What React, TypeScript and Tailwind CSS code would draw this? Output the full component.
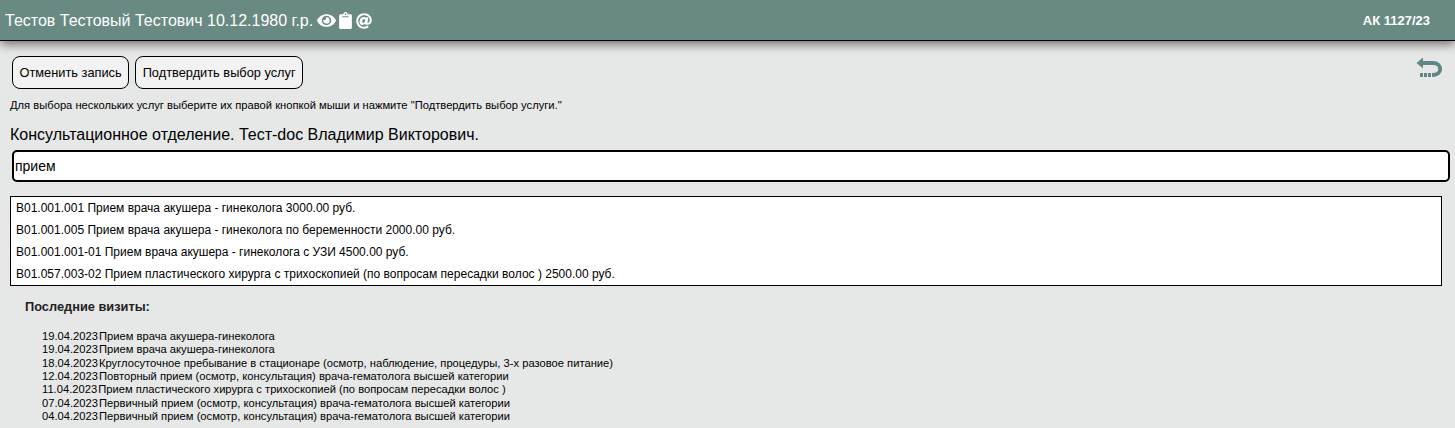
import React from 'react';
import { FaEye, FaClipboard, FaAt } from 'react-icons/fa';

const services = [
  'B01.001.001 Прием врача акушера - гинеколога 3000.00 руб.',
  'B01.001.005 Прием врача акушера - гинеколога по беременности 2000.00 руб.',
  'B01.001.001-01 Прием врача акушера - гинеколога с УЗИ 4500.00 руб.',
  'B01.057.003-02 Прием пластического хирурга с трихоскопией (по вопросам пересадки волос ) 2500.00 руб.',
];

const visits = [
  ['19.04.2023', 'Прием врача акушера-гинеколога'],
  ['19.04.2023', 'Прием врача акушера-гинеколога'],
  ['18.04.2023', 'Круглосуточное пребывание в стационаре (осмотр, наблюдение, процедуры, 3-х разовое питание)'],
  ['12.04.2023', 'Повторный прием (осмотр, консультация) врача-гематолога высшей категории'],
  ['11.04.2023', 'Прием пластического хирурга с трихоскопией (по вопросам пересадки волос )'],
  ['07.04.2023', 'Первичный прием (осмотр, консультация) врача-гематолога высшей категории'],
  ['04.04.2023', 'Первичный прием (осмотр, консультация) врача-гематолога высшей категории'],
];

const App: React.FC = () => {
  return (
    <div className="h-[428px] w-[1455px] overflow-hidden bg-[#e6e8e7] font-['Liberation_Sans',Arial,sans-serif] text-black">
      {/* Шапка */}
      <div className="flex h-[41px] items-center justify-between border-b-[1px] border-black bg-[#688a82] pl-[5px] pr-[25px] pt-[1px] text-white shadow-[0_3px_10px_rgba(0,0,0,0.55)]">
        <div className="flex items-center text-[16px]">
          <span>Тестов Тестовый Тестович 10.12.1980 г.р.</span>
          <span className="ml-[4px] flex items-center gap-[3px]">
            <FaEye className="h-[17px] w-[19px]" />
            <FaClipboard className="h-[17px] w-[13px]" />
            <FaAt className="ml-[1px] h-[16px] w-[16px]" />
          </span>
        </div>
        <span className="text-[13px] font-bold">АК 1127/23</span>
      </div>

      <div className="flex items-start justify-between pl-[12px] pr-[13px] pt-[15px]">
        <div className="flex gap-[6px]">
          <button className="h-[33px] rounded-[8px] border border-black bg-[#f2f2f2] px-[6.5px] text-[12.8px]">Отменить запись</button>
          <button className="h-[33px] rounded-[8px] border border-black bg-[#f2f2f2] px-[6.5px] text-[12.8px]">Подтвердить выбор услуг</button>
        </div>
        <svg width="26" height="22" viewBox="0 0 26 22" className="mt-[1px]" fill="none">
          <path d="M0.5 6 L7 0.5 V11.5 Z" fill="#5f8585" />
          <path d="M5 6 H17 C26.5 6 26.5 18 17 18" stroke="#5f8585" strokeWidth="3.8" />
          <path d="M4 18 H17" stroke="#5f8585" strokeWidth="3.8" strokeDasharray="3 1" />
        </svg>
      </div>

      <p className="mt-[10px] pl-[10px] text-[11.2px] leading-[12px]">
        Для выбора нескольких услуг выберите их правой кнопкой мыши и нажмите "Подтвердить выбор услуги."
      </p>

      <h2 className="mt-[15px] pl-[10px] text-[16px] leading-[18px]">Консультационное отделение. Тест-doc Владимир Викторович.</h2>

      <div className="ml-[12px] mr-[5px] mt-[6px] flex h-[32px] items-center rounded-[5px] border-2 border-black bg-white pl-[2px] text-[14px]">
        <span className="-ml-[1px]">прием</span>
      </div>

      <div className="ml-[10px] mr-[13px] mt-[14px] border border-black bg-white py-0 pl-[5px] text-[12px]">
        {services.map((s) => (
          <div key={s} className="h-[22px] leading-[22px]">{s}</div>
        ))}
      </div>

      <h3 className="mt-[13px] pl-[25px] text-[12.8px] font-bold leading-[16px] text-[#222]">Последние визиты:</h3>

      <div className="mt-[15px] pl-[42px] text-[11.2px] leading-[13.33px]">
        {visits.map(([date, name], i) => (
          <div key={i} className="flex gap-[1px]">
            <span>{date}</span>
            <span>{name}</span>
          </div>
        ))}
      </div>
    </div>
  );
};

export default App;
